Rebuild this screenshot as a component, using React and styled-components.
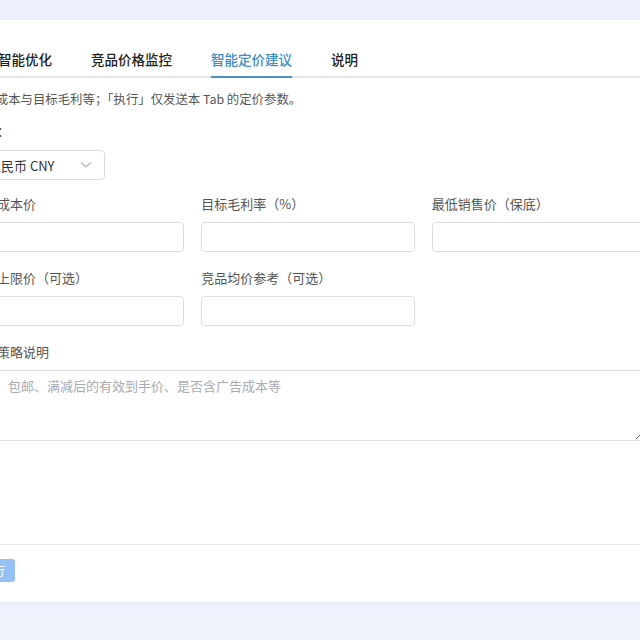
import React from "react";
import styled, { createGlobalStyle } from "styled-components";

const Global = createGlobalStyle`
  html, body { margin: 0; padding: 0; overflow: hidden; }
  body {
    background: #eef1fc;
    font-family: "Noto Sans CJK SC", "Noto Sans", sans-serif;
  }
  * { box-sizing: border-box; }
`;

const Page = styled.div`
  width: 640px;
  height: 640px;
  overflow: hidden;
  padding: 20px 0 39px;
  background: linear-gradient(#eceffd, #f0f2fc);
`;

const Card = styled.div`
  margin-left: -45px;
  width: 706px;
  background: #fff;
  border-radius: 4px;
  box-shadow: 0 1px 4px rgba(120, 130, 180, 0.12);
`;

const TabBar = styled.div`
  display: flex;
  padding: 22px 16px 0 43px;
  border-bottom: 2px solid #e4e5e8;
`;

const Tab = styled.div`
  font-size: 13.5px;
  line-height: 34px;
  font-weight: 500;
  margin-right: 39px;
  margin-bottom: -2px;
  color: ${(p) => (p.$active ? "#3b8cc4" : "#222")};
  border-bottom: 2px solid ${(p) => (p.$active ? "#4a93c8" : "transparent")};
  white-space: nowrap;
`;

const Body = styled.div`
  padding: 12px 16px 103px;
`;

const Hint = styled.div`
  font-size: 12.4px;
  line-height: 18px;
  color: #555;
  white-space: nowrap;
`;

const Field = styled.div`
  display: flex;
  flex-direction: column;
  gap: 9px;
  grid-column: ${(p) => (p.$full ? "1 / -1" : "auto")};
`;

const CurrencyField = styled(Field)`
  margin-top: 14px;
  gap: 10px;
`;

const Label = styled.div`
  font-size: 13px;
  line-height: 18px;
  color: #555;
  white-space: nowrap;
`;

const Grid = styled.div`
  margin-top: 15px;
  display: grid;
  grid-template-columns: repeat(3, 1fr);
  column-gap: 17px;
  row-gap: 17px;
`;

const Input = styled.input`
  height: 30px;
  width: 100%;
  border: 1px solid #dcdee3;
  border-radius: 4px;
  background: #fff;
  font-size: 13px;
  padding: 0 10px;
  outline: none;
`;

const Select = styled.div`
  width: 134px;
  height: 30px;
  border: 1px solid #dcdee3;
  border-radius: 4px;
  display: flex;
  align-items: center;
  justify-content: space-between;
  padding: 0 12px 0 16px;
  font-size: 13px;
  color: #333;
`;

const TextArea = styled.textarea`
  height: 71px;
  width: 100%;
  border: 1px solid #dcdee3;
  border-radius: 4px;
  padding: 5px 10px;
  font-family: "Noto Sans CJK SC", "Noto Sans", sans-serif;
  font-size: 13px;
  line-height: 20px;
  resize: vertical;
  outline: none;
  &::placeholder { color: #a8abb2; }
`;

const Footer = styled.div`
  display: flex;
  align-items: center;
  border-top: 1px solid #e8e9ec;
  padding: 14px 16px 20px;
`;

const Button = styled.button`
  height: 23px;
  padding: 0 10px;
  border: none;
  border-radius: 3px;
  background: #94c1f6;
  color: #fff;
  font-family: "Noto Sans CJK SC", "Noto Sans", sans-serif;
  font-size: 12px;
  line-height: 23px;
`;

const Chevron = () => (
  <svg width="12" height="8" viewBox="0 0 12 8" fill="none">
    <path d="M1 1.5 L6 6 L11 1.5" stroke="#b4b7bd" strokeWidth="1.1" />
  </svg>
);

export default function App() {
  return (
    <>
      <Global />
      <Page>
        <Card>
          <TabBar>
            <Tab>智能优化</Tab>
            <Tab>竞品价格监控</Tab>
            <Tab $active>智能定价建议</Tab>
            <Tab>说明</Tab>
          </TabBar>
          <Body>
            <Hint>填写成本与目标毛利等；「执行」仅发送本 Tab 的定价参数。</Hint>
            <CurrencyField>
              <Label>币种：</Label>
              <Select>
                <span>人民币 CNY</span>
                <Chevron />
              </Select>
            </CurrencyField>
            <Grid>
              <Field>
                <Label>采购成本价</Label>
                <Input />
              </Field>
              <Field>
                <Label>目标毛利率（%）</Label>
                <Input />
              </Field>
              <Field>
                <Label>最低销售价（保底）</Label>
                <Input />
              </Field>
              <Field>
                <Label>建议上限价（可选）</Label>
                <Input />
              </Field>
              <Field>
                <Label>竞品均价参考（可选）</Label>
                <Input />
              </Field>
              <div />
              <Field $full>
                <Label>补充策略说明</Label>
                <TextArea placeholder="例：包邮、满减后的有效到手价、是否含广告成本等" />
              </Field>
            </Grid>
          </Body>
          <Footer>
            <Button>执行</Button>
          </Footer>
        </Card>
      </Page>
    </>
  );
}
